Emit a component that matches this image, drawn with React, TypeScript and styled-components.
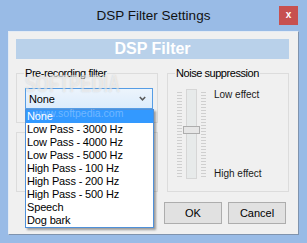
import * as React from 'react';
import styled, { createGlobalStyle } from 'styled-components';

const GlobalStyle = createGlobalStyle`
  html, body {
    margin: 0;
    padding: 0;
    background: #99bbe6;
  }
`;

const FILTERS = [
  'None',
  'Low Pass - 3000 Hz',
  'Low Pass - 4000 Hz',
  'Low Pass - 5000 Hz',
  'High Pass - 100 Hz',
  'High Pass - 200 Hz',
  'High Pass - 500 Hz',
  'Speech',
  'Dog bark',
];

export default function App() {
  const [selected, setSelected] = React.useState(0);

  return (
    <>
      <GlobalStyle />
      <Window>
        <TitleBar>
          <span />
          <Title>DSP Filter Settings</Title>
          <CloseButton>x</CloseButton>
        </TitleBar>
        <Client>
          <Banner>DSP Filter</Banner>
          <Body>
            <LeftColumn>
              <Group height={50}>
                <Legend>Pre-recording filter</Legend>
                <ComboWrap>
                  <Combo>
                    <span>{FILTERS[selected]}</span>
                    <svg width="7" height="5" viewBox="0 0 7 5">
                      <polyline points="0.8,1 3.5,3.8 6.2,1" fill="none" stroke="#5a5a5a" strokeWidth="1.5" />
                    </svg>
                  </Combo>
                  <DropList>
                    {FILTERS.map((f, i) => (
                      <Item key={f} active={i === selected} onClick={() => setSelected(i)}>
                        {f}
                      </Item>
                    ))}
                  </DropList>
                </ComboWrap>
              </Group>
              <Group height={60} />
            </LeftColumn>
            <Group height={119} width={122}>
              <Legend>Noise suppression</Legend>
              <SliderRow>
                <Ticks />
                <Track>
                  <Thumb />
                </Track>
                <Ticks />
                <EffectLabels>
                  <span>Low effect</span>
                  <span>High effect</span>
                </EffectLabels>
              </SliderRow>
            </Group>
          </Body>
          <Buttons>
            <Button>OK</Button>
            <Button>Cancel</Button>
          </Buttons>
          <Watermark>
            <Brand>SOFTPEDIA</Brand>
            <Url>www.softpedia.com</Url>
          </Watermark>
        </Client>
      </Window>
    </>
  );
}

const Window = styled.div`
  width: 307px;
  height: 243px;
  background: #99bbe6;
  display: flex;
  flex-direction: column;
  font-family: "Liberation Sans", Arial, sans-serif;
  color: #000;
`;

const TitleBar = styled.div`
  height: 31px;
  display: grid;
  grid-template-columns: 1fr auto 1fr;
  align-items: start;
  flex-shrink: 0;
`;

const Title = styled.div`
  font-size: 13.5px;
  line-height: 16px;
  margin-top: 8px;
  color: #111;
`;

const CloseButton = styled.div`
  justify-self: end;
  margin: 6px 9px 0 0;
  width: 19px;
  height: 19px;
  background: #c75050;
  color: #fff;
  font-weight: bold;
  font-size: 10px;
  line-height: 17px;
  text-align: center;
`;

const Client = styled.div`
  position: relative;
  margin: 0 8px 8px 8px;
  flex: 1;
  background: #f0f0f0;
  border: 1px solid;
  border-color: #e3ebf5 #7f93ad #7f93ad #e3ebf5;
  padding: 7px 9px 0 7px;
  display: flex;
  flex-direction: column;
`;

const Banner = styled.div`
  height: 20px;
  background: #b9d1ea;
  color: #fff;
  font-weight: bold;
  font-size: 16px;
  line-height: 20px;
  text-align: center;
`;

const Body = styled.div`
  margin-top: 14px;
  display: flex;
  gap: 9px;
  align-items: flex-start;
`;

const LeftColumn = styled.div`
  width: 142px;
  display: flex;
  flex-direction: column;
  gap: 9px;
`;

const Group = styled.div<{ height: number; width?: number }>`
  position: relative;
  box-sizing: border-box;
  height: ${(p) => p.height}px;
  width: ${(p) => (p.width ? `${p.width}px` : 'auto')};
  border: 1px solid #dcdcdc;
`;

const Legend = styled.div`
  position: absolute;
  top: -7px;
  left: 7px;
  padding: 0 1px;
  background: #f0f0f0;
  font-size: 11px;
  line-height: 13px;
  letter-spacing: -0.45px;
  white-space: nowrap;
`;

const ComboWrap = styled.div`
  position: relative;
  margin: 14px 0 0 8px;
  width: 128px;
`;

const Combo = styled.div`
  box-sizing: border-box;
  height: 21px;
  border: 1px solid #569de5;
  background: linear-gradient(#ecf4fc, #dcecfc);
  display: flex;
  align-items: center;
  justify-content: space-between;
  padding: 0 6px 0 3px;
  font-size: 11px;
  letter-spacing: -0.15px;
`;

const DropList = styled.div`
  position: absolute;
  top: 21px;
  left: 0;
  width: 129px;
  box-sizing: border-box;
  border: 1px solid #4f90d9;
  background: #fff;
  box-shadow: 2px 2px 2px rgba(0, 0, 0, 0.35);
  z-index: 2;
`;

const Item = styled.div<{ active: boolean }>`
  height: 13px;
  line-height: 13px;
  padding-left: 1px;
  font-size: 11px;
  letter-spacing: -0.15px;
  white-space: nowrap;
  background: ${(p) => (p.active ? '#3399ff' : 'transparent')};
  color: ${(p) => (p.active ? '#fff' : '#000')};
  cursor: default;
`;

const SliderRow = styled.div`
  display: flex;
  align-items: flex-start;
  margin: 15px 0 0 9px;
  height: 90px;
`;

const Ticks = styled.div`
  width: 5px;
  height: 86px;
  margin-top: 3px;
  background: repeating-linear-gradient(to bottom, #cfcfcf 0 1px, transparent 1px 3px);
  & + div {
    margin-left: 4px;
  }
`;

const Track = styled.div`
  position: relative;
  box-sizing: border-box;
  width: 11px;
  height: 90px;
  margin-right: 4px;
  background: #e7eaea;
  border: 1px solid #d6d6d6;
`;

const Thumb = styled.div`
  position: absolute;
  top: 36px;
  left: -4px;
  box-sizing: border-box;
  width: 17px;
  height: 8px;
  background: #e6e6e6;
  border: 1px solid #adadad;
`;

const EffectLabels = styled.div`
  margin-left: 8px !important;
  height: 91px;
  display: flex;
  flex-direction: column;
  justify-content: space-between;
  font-size: 10px;
  line-height: 12px;
  color: #1a1a1a;
  white-space: nowrap;
`;

const Buttons = styled.div`
  margin-top: 10px;
  padding-right: 3px;
  display: flex;
  justify-content: flex-end;
  gap: 6px;
`;

const Button = styled.div`
  box-sizing: border-box;
  width: 58px;
  height: 22px;
  background: #e1e1e1;
  border: 1px solid #adadad;
  font-size: 11px;
  line-height: 20px;
  text-align: center;
`;

const Watermark = styled.div`
  position: absolute;
  left: 16px;
  top: 39px;
  pointer-events: none;
  z-index: 3;
`;

const Brand = styled.div`
  font-weight: bold;
  font-size: 16px;
  line-height: 18px;
  letter-spacing: 0.4px;
  transform: scaleY(1.5);
  transform-origin: top left;
  color: rgba(255, 255, 255, 0.55);
  text-shadow: 0 0 1px rgba(90, 90, 90, 0.25);
`;

const Url = styled.div`
  margin: 18px 0 0 8px;
  font-size: 10.5px;
  line-height: 12px;
  color: rgba(255, 255, 255, 0.3);
`;
